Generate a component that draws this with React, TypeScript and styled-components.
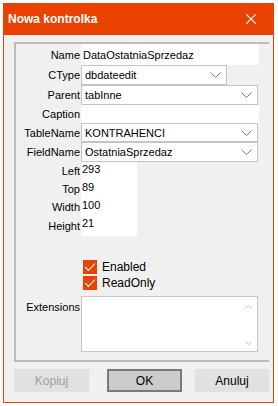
import React from 'react';
import styled, { createGlobalStyle } from 'styled-components';

const GlobalStyle = createGlobalStyle`
  body {
    margin: 0;
    background: #ffffff;
    font-family: "Liberation Sans", Arial, sans-serif;
    font-size: 11px;
    color: #000000;
  }
`;

const ACCENT = '#e84100';

const Window = styled.div`
  margin: 3px 0 0 3px;
  width: 271px;
  height: 400px;
  box-sizing: border-box;
  border: 1px solid ${ACCENT};
  border-top: none;
  background: #f0f0f0;
  display: flex;
  flex-direction: column;
`;

const TitleBar = styled.div`
  height: 32px;
  margin: 0 -1px;
  background: ${ACCENT};
  display: flex;
  align-items: center;
  justify-content: space-between;
  padding: 0 18px 0 5px;
`;

const Title = styled.span`
  color: #ffffff;
  font-size: 12px;
  font-weight: bold;
  margin-top: -1px;
`;

const Body = styled.div`
  padding: 7px 0 0 10px;
  display: flex;
  flex-direction: column;
`;

const GroupBox = styled.div`
  width: 255px;
  height: 320px;
  box-sizing: border-box;
  border-top: 2px solid #bcbcbc;
  border-left: 2px solid #bcbcbc;
  border-bottom: 2px solid #bcbcbc;
  display: flex;
  flex-direction: column;
`;

const Row = styled.div<{ $h: number }>`
  display: flex;
  align-items: stretch;
  height: ${(p) => p.$h}px;
`;

const Label = styled.div`
  width: 65px;
  box-sizing: border-box;
  padding-right: 1px;
  text-align: right;
  display: flex;
  align-items: center;
  justify-content: flex-end;
  white-space: nowrap;
`;

const TextField = styled.div<{ $w: number }>`
  width: ${(p) => p.$w}px;
  background: #ffffff;
  padding-left: 2px;
  display: flex;
  align-items: center;
  white-space: nowrap;
`;

const NumField = styled.div`
  width: 55px;
  background: #ffffff;
  padding-left: 1px;
  line-height: 15px;
`;

const Combo = styled.div<{ $w: number }>`
  width: ${(p) => p.$w}px;
  box-sizing: border-box;
  background: #ffffff;
  border: 1px solid #c4c4c4;
  padding: 0 5px 0 3px;
  display: flex;
  align-items: center;
  justify-content: space-between;
  white-space: nowrap;
`;

const Chevron = () => (
  <svg width="11" height="6" viewBox="0 0 11 6">
    <polyline points="0.5,0.5 5.5,5.5 10.5,0.5" fill="none" stroke="#7a7a7a" strokeWidth="1" />
  </svg>
);

const CloseIcon = () => (
  <svg width="10" height="10" viewBox="0 0 10 10">
    <line x1="0" y1="0" x2="10" y2="10" stroke="#ffffff" strokeWidth="1.1" />
    <line x1="10" y1="0" x2="0" y2="10" stroke="#ffffff" strokeWidth="1.1" />
  </svg>
);

const Spacer = styled.div<{ $h: number }>`
  height: ${(p) => p.$h}px;
  flex-shrink: 0;
`;

const CheckList = styled.div`
  margin-left: 67px;
  display: flex;
  flex-direction: column;
  gap: 2px;
`;

const CheckRow = styled.div`
  display: flex;
  align-items: center;
  height: 14px;
  gap: 5px;
  font-size: 12px;
`;

const CheckBox = styled.div`
  width: 14px;
  height: 14px;
  background: ${ACCENT};
  display: flex;
  align-items: center;
  justify-content: center;
`;

const Tick = () => (
  <svg width="12" height="10" viewBox="0 0 12 10">
    <polyline points="1,5 4.5,8.5 11,1.5" fill="none" stroke="#ffffff" strokeWidth="1.1" />
  </svg>
);

const MemoRow = styled.div`
  display: flex;
  margin-top: 6px;
`;

const MemoLabel = styled(Label)`
  align-items: flex-start;
  padding-top: 5px;
  height: 18px;
`;

const Memo = styled.div`
  width: 177px;
  height: 56px;
  box-sizing: border-box;
  background: #ffffff;
  border: 1px solid #c8c8c8;
  display: flex;
  justify-content: flex-end;
`;

const ScrollTrack = styled.div`
  width: 17px;
  display: flex;
  flex-direction: column;
  justify-content: space-between;
  align-items: center;
  padding: 8px 0 6px;
`;

const Arrow = ({ up }: { up?: boolean }) => (
  <svg width="7" height="4" viewBox="0 0 7 4">
    <polyline
      points={up ? '0.5,3.5 3.5,0.5 6.5,3.5' : '0.5,0.5 3.5,3.5 6.5,0.5'}
      fill="none"
      stroke="#c0c0c0"
      strokeWidth="1"
    />
  </svg>
);

const ButtonBar = styled.div`
  display: flex;
  margin-top: 7px;
`;

const Button = styled.div<{ $w: number; $gap?: number; $default?: boolean; $disabled?: boolean }>`
  width: ${(p) => p.$w}px;
  height: 23px;
  box-sizing: border-box;
  margin-left: ${(p) => p.$gap || 0}px;
  background: ${(p) => (p.$default ? '#cccccc' : '#e1e1e1')};
  border: ${(p) => (p.$default ? '2px solid #7a7a7a' : '1px solid #e1e1e1')};
  color: ${(p) => (p.$disabled ? '#a0a0a0' : '#000000')};
  display: flex;
  align-items: center;
  justify-content: center;
  font-size: 12px;
`;

const rows: { label: string; h: number; kind: 'text' | 'combo'; value: string; w: number }[] = [
  { label: 'Name', h: 21, kind: 'text', value: 'DataOstatniaSprzedaz', w: 176 },
  { label: 'CType', h: 20, kind: 'combo', value: 'dbdateedit', w: 146 },
  { label: 'Parent', h: 20, kind: 'combo', value: 'tabInne', w: 177 },
  { label: 'Caption', h: 18, kind: 'text', value: '', w: 176 },
  { label: 'TableName', h: 19, kind: 'combo', value: 'KONTRAHENCI', w: 177 },
  { label: 'FieldName', h: 20, kind: 'combo', value: 'OstatniaSprzedaz', w: 177 },
];

const numbers = [
  { label: 'Left', value: '293', h: 18 },
  { label: 'Top', value: '89', h: 18 },
  { label: 'Width', value: '100', h: 18 },
  { label: 'Height', value: '21', h: 20 },
];

export default function App() {
  return (
    <>
      <GlobalStyle />
      <Window>
        <TitleBar>
          <Title>Nowa kontrolka</Title>
          <CloseIcon />
        </TitleBar>
        <Body>
          <GroupBox>
            {rows.map((r) => (
              <Row key={r.label} $h={r.h}>
                <Label>{r.label}</Label>
                {r.kind === 'text' ? (
                  <TextField $w={r.w}>{r.value}</TextField>
                ) : (
                  <Combo $w={r.w}>
                    <span>{r.value}</span>
                    <Chevron />
                  </Combo>
                )}
              </Row>
            ))}
            {numbers.map((n) => (
              <Row key={n.label} $h={n.h}>
                <Label>{n.label}</Label>
                <NumField>{n.value}</NumField>
              </Row>
            ))}
            <Spacer $h={24} />
            <CheckList>
              <CheckRow>
                <CheckBox>
                  <Tick />
                </CheckBox>
                Enabled
              </CheckRow>
              <CheckRow>
                <CheckBox>
                  <Tick />
                </CheckBox>
                ReadOnly
              </CheckRow>
            </CheckList>
            <MemoRow>
              <MemoLabel>Extensions</MemoLabel>
              <Memo>
                <ScrollTrack>
                  <Arrow up />
                  <Arrow />
                </ScrollTrack>
              </Memo>
            </MemoRow>
          </GroupBox>
          <ButtonBar>
            <Button $w={75} $disabled>
              Kopiuj
            </Button>
            <Button $w={75} $gap={18} $default>
              OK
            </Button>
            <Button $w={74} $gap={13}>
              Anuluj
            </Button>
          </ButtonBar>
        </Body>
      </Window>
    </>
  );
}
